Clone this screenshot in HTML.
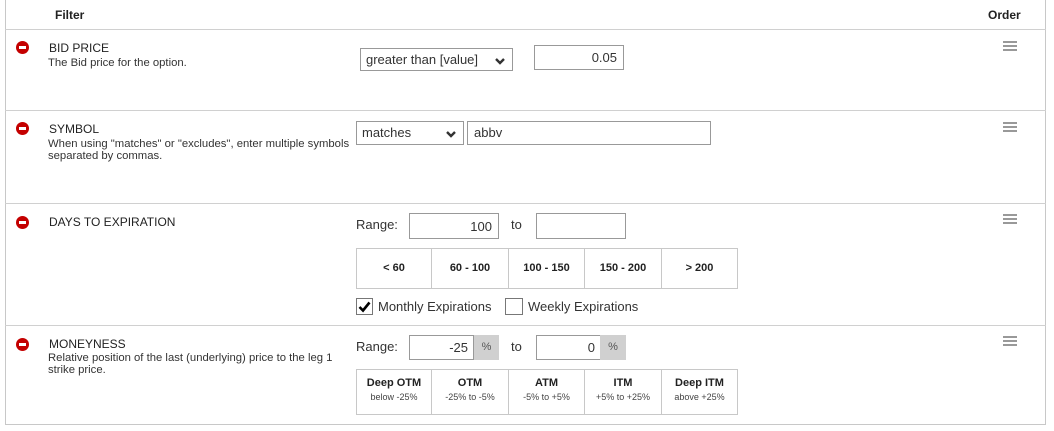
<!DOCTYPE html>
<html><head><meta charset="utf-8"><style>
*{box-sizing:border-box;margin:0;padding:0}
body{width:1054px;height:431px;background:#fff;font-family:"Liberation Sans",sans-serif;color:#222;position:relative;overflow:hidden}
.a{position:absolute}
.box{position:absolute;border:1px solid #c8c8c8;background:#fff}
.hl{position:absolute;left:5px;width:1041px;height:1px;background:#d0d0d0}
.ic{position:absolute;width:13px;height:13px;border-radius:50%;background:#c40000}
.ic:after{content:"";position:absolute;left:3px;top:5px;width:7px;height:3px;background:#fff}
.t{position:absolute;left:49px;font-size:12px;color:#222}
.d{position:absolute;left:48px;font-size:11.3px;color:#333;line-height:12px}
.hb{position:absolute;left:1003px;width:14px;height:10px}
.f{font-size:13px;color:#333}
.g{display:flex;position:absolute;border:1px solid #c8c8c8}
.g div{border-right:1px solid #c8c8c8;text-align:center;font-size:11px;font-weight:bold;color:#222}
.g div:last-child{border-right:none}
.g span{display:block;font-weight:normal;font-size:9px;color:#444;margin-top:3px}
.pc{position:absolute;background:#d0d0d0;font-size:11px;color:#555;text-align:center;line-height:24px}
.chev{position:absolute;width:10px;height:8px}
</style></head><body>
<div class="a" style="left:5px;top:0;width:1041px;height:425px;border-left:1px solid #c8c8c8;border-right:1px solid #c8c8c8;border-bottom:1px solid #c8c8c8"></div>
<div class="hl" style="top:29px"></div>
<div class="hl" style="top:110px"></div>
<div class="hl" style="top:203px"></div>
<div class="hl" style="top:325px"></div>
<div class="a" style="left:55px;top:8px;font-size:12px;font-weight:bold">Filter</div>
<div class="a" style="left:988px;top:8px;font-size:12px;font-weight:bold">Order</div>

<div class="ic" style="left:16px;top:41px"></div>
<div class="t" style="top:41px">BID PRICE</div>
<div class="d" style="top:57px">The Bid price for the option.</div>
<div class="box f" style="left:360px;top:48px;width:153px;height:23px;padding:3px 5px;border-color:#999">greater than [value]<svg class="chev" style="left:134px;top:8px" viewBox="0 0 10 8"><path d="M1 2 L5 6 L9 2" stroke="#333" stroke-width="2.4" fill="none"/></svg></div>
<div class="box f" style="left:534px;top:45px;width:90px;height:25px;padding:4px 6px;text-align:right;border-color:#999">0.05</div>
<svg class="hb" style="top:41px" viewBox="0 0 14 10"><path d="M0 1H14M0 5H14M0 9H14" stroke="#999" stroke-width="2"/></svg>

<div class="ic" style="left:16px;top:122px"></div>
<div class="t" style="top:122px">SYMBOL</div>
<div class="d" style="top:138px">When using "matches" or "excludes", enter multiple symbols<br>separated by commas.</div>
<div class="box f" style="left:356px;top:121px;width:108px;height:24px;padding:3px 5px;border-color:#999">matches<svg class="chev" style="left:89px;top:8px" viewBox="0 0 10 8"><path d="M1 2 L5 6 L9 2" stroke="#333" stroke-width="2.4" fill="none"/></svg></div>
<div class="box f" style="left:467px;top:121px;width:244px;height:24px;padding:3px 6px;border-color:#999">abbv</div>
<svg class="hb" style="top:122px" viewBox="0 0 14 10"><path d="M0 1H14M0 5H14M0 9H14" stroke="#999" stroke-width="2"/></svg>

<div class="ic" style="left:16px;top:216px"></div>
<div class="t" style="top:215px">DAYS TO EXPIRATION</div>
<div class="a f" style="left:356px;top:217px">Range:</div>
<div class="box f" style="left:409px;top:213px;width:90px;height:26px;padding:5px 6px;text-align:right;border-color:#999">100</div>
<div class="a f" style="left:511px;top:217px">to</div>
<div class="box" style="left:536px;top:213px;width:90px;height:26px;border-color:#999"></div>
<div class="g" style="left:356px;top:248px;width:382px;height:41px">
<div style="width:75px;line-height:39px">&lt; 60</div><div style="width:77px;line-height:39px">60 - 100</div><div style="width:76px;line-height:39px">100 - 150</div><div style="width:77px;line-height:39px">150 - 200</div><div style="flex:1;line-height:39px">&gt; 200</div></div>
<div class="box" style="left:356px;top:298px;width:17px;height:17px;border-color:#777"><svg class="a" style="left:1px;top:1px" width="13" height="13" viewBox="0 0 13 13"><path d="M1.5 7 L5 10.5 L11.5 2.5" stroke="#000" stroke-width="2.6" fill="none"/></svg></div>
<div class="a f" style="left:378px;top:299px">Monthly Expirations</div>
<div class="box" style="left:505px;top:298px;width:18px;height:17px;border-color:#777"></div>
<div class="a f" style="left:528px;top:299px">Weekly Expirations</div>
<svg class="hb" style="top:214px" viewBox="0 0 14 10"><path d="M0 1H14M0 5H14M0 9H14" stroke="#999" stroke-width="2"/></svg>

<div class="ic" style="left:16px;top:338px"></div>
<div class="t" style="top:337px">MONEYNESS</div>
<div class="d" style="top:352px">Relative position of the last (underlying) price to the leg 1<br>strike price.</div>
<div class="a f" style="left:356px;top:339px">Range:</div>
<div class="box f" style="left:409px;top:335px;width:65px;height:25px;padding:4px 5px;text-align:right;border-color:#999">-25</div>
<div class="pc" style="left:474px;top:335px;width:25px;height:25px">%</div>
<div class="a f" style="left:511px;top:339px">to</div>
<div class="box f" style="left:536px;top:335px;width:65px;height:25px;padding:4px 5px;text-align:right;border-color:#999">0</div>
<div class="pc" style="left:600px;top:335px;width:26px;height:25px">%</div>
<div class="g" style="left:356px;top:369px;width:382px;height:46px">
<div style="width:75px;padding-top:7px">Deep OTM<span>below -25%</span></div><div style="width:77px;padding-top:7px">OTM<span>-25% to -5%</span></div><div style="width:76px;padding-top:7px">ATM<span>-5% to +5%</span></div><div style="width:77px;padding-top:7px">ITM<span>+5% to +25%</span></div><div style="flex:1;padding-top:7px">Deep ITM<span>above +25%</span></div></div>
<svg class="hb" style="top:336px" viewBox="0 0 14 10"><path d="M0 1H14M0 5H14M0 9H14" stroke="#999" stroke-width="2"/></svg>
</body></html>
